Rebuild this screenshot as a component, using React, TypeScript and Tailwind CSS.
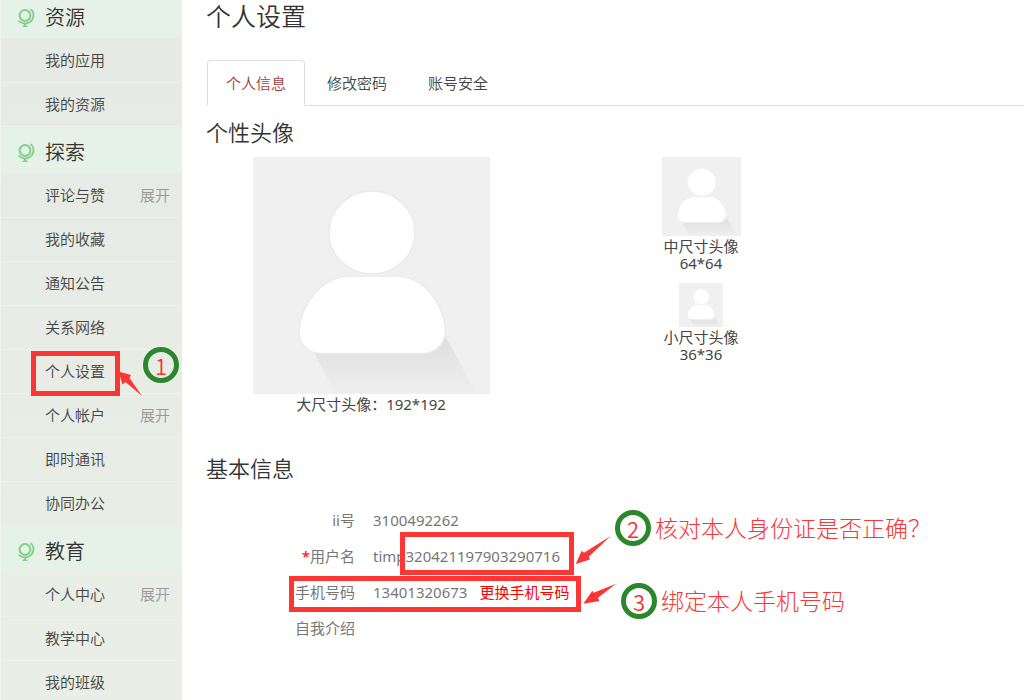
import { useState } from 'react'
import type { ReactNode } from 'react'
import clsx from 'clsx'

interface NavItem {
  label: string
  expandable?: boolean
  step?: ReactNode
}

interface NavSection {
  title: string
  items: NavItem[]
}

function GlobeIcon() {
  return (
    <svg width="18" height="20" viewBox="0 0 18 20" fill="none" stroke="#83d08a" aria-hidden="true">
      <circle cx="8" cy="7.5" r="5.4" strokeWidth="2" />
      <path d="M13.600 1.200C18 4.500 17 11.500 12.800 14C9 16.400 4 15.500 1.500 12.500" strokeWidth="1.8" />
      <path d="M8 15v3.500" strokeWidth="2" />
      <path d="M5.500 18.300h5" strokeWidth="1.400" />
    </svg>
  )
}

function Avatar({ className }: { className: string }) {
  return (
    <svg viewBox="0 0 237 237" className={className} role="img" aria-label="头像">
      <defs>
        <linearGradient id="avatar-shadow" x1="0" y1="180" x2="0" y2="237" gradientUnits="userSpaceOnUse">
          <stop offset="0" stopColor="#dedede" />
          <stop offset="1" stopColor="#efefef" />
        </linearGradient>
      </defs>
      <rect width="237" height="237" fill="#f0f0f0" />
      <path d="M60 193L82 237H224L191 177Z" fill="url(#avatar-shadow)" />
      <g fill="#fff" stroke="#ebebeb" strokeWidth="1.5">
        <ellipse cx="119" cy="75.5" rx="43" ry="41.5" />
        <path d="M97 119H145C172 121 189 145 192.500 172C193 187 182 196.500 170 196.500H67C55 196 45 186 46 173C49 146 68 120 97 119Z" />
      </g>
    </svg>
  )
}

function StepBadge({ step, className }: { step: number; className?: string }) {
  return (
    <span
      className={clsx(
        "flex h-9 w-9 shrink-0 items-center justify-center rounded-full border-[5px] border-[#2c862c] font-['Noto_Sans_CJK_SC',sans-serif] text-[22px] font-[350] text-[#fc2f2f]",
        className
      )}
    >
      {step}
    </span>
  )
}

function SettingsMarker() {
  return (
    <>
      <span className="pointer-events-none absolute left-[31px] top-px h-[45px] w-[89px] border-[5px] border-[#fc3535]" />
      <svg className="absolute left-[118px] top-[21px]" width="26" height="26" viewBox="0 0 26 26" aria-hidden="true">
        <path d="M0.500 0.500L13 4L11.500 7L24 25L7.500 11L4.500 13.500Z" fill="#fc3535" />
      </svg>
      <StepBadge step={1} className="absolute left-[143px] -top-[3px]" />
    </>
  )
}

const sections: NavSection[] = [
  {
    title: '资源',
    items: [{ label: '我的应用' }, { label: '我的资源' }],
  },
  {
    title: '探索',
    items: [
      { label: '评论与赞', expandable: true },
      { label: '我的收藏' },
      { label: '通知公告' },
      { label: '关系网络' },
      { label: '个人设置', step: <SettingsMarker /> },
      { label: '个人帐户', expandable: true },
      { label: '即时通讯' },
      { label: '协同办公' },
    ],
  },
  {
    title: '教育',
    items: [
      { label: '个人中心', expandable: true },
      { label: '教学中心' },
      { label: '我的班级' },
    ],
  },
]

const tabs = ['个人信息', '修改密码', '账号安全']

function Sidebar() {
  return (
    <aside className="w-[182px] shrink-0 border-l border-[#f0f4f0] bg-linear-to-b from-[#e5eae5] to-[#e9eee6]">
      <nav className="-mt-[7px]">
        {sections.map((section) => (
          <section key={section.title}>
            <h2 className="flex h-[45px] items-center gap-2.5 bg-[#e6f1e8] pl-4 pt-1 text-xl text-[#333]">
              <GlobeIcon />
              {section.title}
            </h2>
            <ul className="py-px">
              {section.items.map((item) => (
                <li
                  key={item.label}
                  className="relative -ml-px flex h-11 items-center border-b border-[#f1efef] pl-[45px] pr-3 text-[15px] text-[#444]"
                >
                  <a href="#">{item.label}</a>
                  {item.expandable && (
                    <button type="button" className="ml-auto text-[#999]">
                      展开
                    </button>
                  )}
                  {item.step}
                </li>
              ))}
            </ul>
          </section>
        ))}
      </nav>
    </aside>
  )
}

function BasicInfo() {
  return (
    <section className="mt-[38px]">
      <h2 className="text-[22px] leading-8 text-[#333]">基本信息</h2>
      <div className="relative mt-[18px] text-[15px] text-[#777]">
        <dl className="grid auto-rows-[36px] grid-cols-[149px_1fr] items-center gap-x-[18px] font-normal">
          <dt className="text-right">ii号</dt>
          <dd>3100492262</dd>
          <dt className="text-right">
            <span className="text-[#f00]">*</span>用户名
          </dt>
          <dd>timp320421197903290716</dd>
          <dt className="text-right">手机号码</dt>
          <dd className="flex gap-3">
            13401320673
            <a href="#" className="text-[#f00]">更换手机号码</a>
          </dd>
          <dt className="text-right">自我介绍</dt>
          <dd />
        </dl>

        {/* Step 2: id number */}
        <span className="pointer-events-none absolute left-[194px] top-[30px] h-[43px] w-[174px] border-[5px] border-[#fc3535]" />
        <svg className="absolute left-[369px] top-[33px]" width="36" height="30" viewBox="0 0 36 30" aria-hidden="true">
          <path d="M0.700 29L6.700 15.700L9 17.700L35.700 1L13.700 21.700L15 24.500Z" fill="#fc3535" />
        </svg>
        <div className="absolute left-[409px] top-[8px] flex items-center gap-1 whitespace-nowrap text-[23px] font-light text-[#fc3535]">
          <StepBadge step={2} />
          核对本人身份证是否正确？
        </div>

        {/* Step 3: phone number */}
        <span className="pointer-events-none absolute left-[83px] top-[74px] h-[36px] w-[292px] border-[5px] border-[#fc3535]" />
        <svg className="absolute left-[377px] top-[79px]" width="34" height="24" viewBox="0 0 34 24" aria-hidden="true">
          <path d="M0.300 22.700L9.300 9.700L10.700 11.700L33 2.700L15 16.700L16.300 20Z" fill="#fc3535" />
        </svg>
        <div className="absolute left-[415px] top-[81px] flex items-center gap-1 whitespace-nowrap text-[23px] font-light text-[#fc3535]">
          <StepBadge step={3} />
          绑定本人手机号码
        </div>
      </div>
    </section>
  )
}

export default function App() {
  const [activeTab, setActiveTab] = useState(tabs[0])

  return (
    <div className="flex h-screen overflow-hidden bg-white font-['Noto_Sans','Noto_Sans_CJK_SC',sans-serif] font-[350]">
      <Sidebar />

      <main className="min-w-0 flex-1 pl-6">
        <h1 className="text-[25px] leading-8 text-[#333]">个人设置</h1>

        {/* Tabs */}
        <div role="tablist" className="ml-px mt-7 flex gap-[3px] border-b border-[#ddd] text-[15px]">
          {tabs.map((tab) => (
            <button
              key={tab}
              type="button"
              role="tab"
              aria-selected={tab === activeTab}
              onClick={() => setActiveTab(tab)}
              className={clsx(
                '-mb-px h-[46px] rounded-t border px-[18px]',
                tab === activeTab
                  ? 'border-[#ddd] border-b-white bg-white text-[#a33a38]'
                  : 'border-transparent text-[#444]'
              )}
            >
              {tab}
            </button>
          ))}
        </div>

        <section className="mt-[10px]">
          <h2 className="text-[22px] leading-8 text-[#333]">个性头像</h2>
          <div className="mt-[9px] grid grid-cols-[330px_330px] text-center text-[15px] font-normal text-[#444]">
            <figure className="flex flex-col items-center">
              <Avatar className="h-[237px] w-[237px]" />
              <figcaption className="leading-5">大尺寸头像：192*192</figcaption>
            </figure>
            <div className="flex flex-col items-center gap-[11px]">
              <figure className="flex flex-col items-center gap-0.5">
                <Avatar className="h-[79px] w-[79px]" />
                <figcaption className="leading-[17px]">
                  中尺寸头像
                  <br />
                  64*64
                </figcaption>
              </figure>
              <figure className="flex flex-col items-center gap-0.5">
                <Avatar className="h-11 w-11" />
                <figcaption className="leading-[17px]">
                  小尺寸头像
                  <br />
                  36*36
                </figcaption>
              </figure>
            </div>
          </div>
        </section>

        <BasicInfo />
      </main>
    </div>
  )
}
